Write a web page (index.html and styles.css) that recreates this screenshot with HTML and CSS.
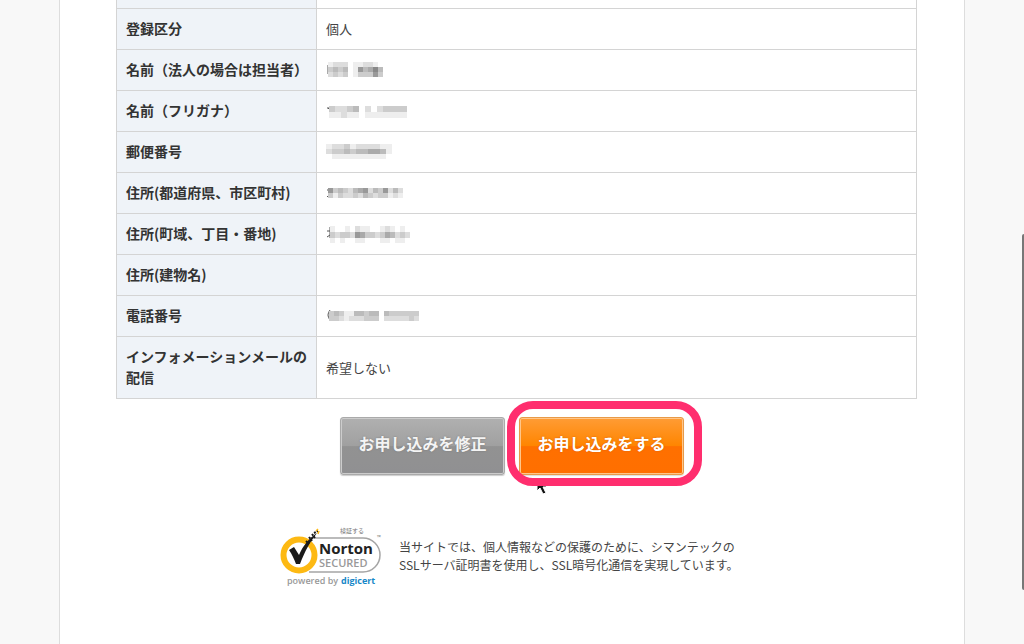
FILE: index.html
```
<!DOCTYPE html>
<html lang="ja">
<head>
  <meta charset="UTF-8">
  <title>お申し込み内容の確認</title>
  <link rel="stylesheet" href="styles.css">
</head>
<body>
  <div class="wrapper">
    <table class="confirm">
      <tbody>
        <tr class="cut"><th></th><td></td></tr>
        <tr><th scope="row">登録区分</th><td>個人</td></tr>
        <tr><th scope="row">名前（法人の場合は担当者）</th><td><svg class="mosaic" data-name="person"></svg></td></tr>
        <tr><th scope="row">名前（フリガナ）</th><td><svg class="mosaic" data-name="kana"></svg></td></tr>
        <tr><th scope="row">郵便番号</th><td><svg class="mosaic" data-name="zip"></svg></td></tr>
        <tr><th scope="row">住所(都道府県、市区町村)</th><td><svg class="mosaic" data-name="city"></svg></td></tr>
        <tr><th scope="row">住所(町域、丁目・番地)</th><td><svg class="mosaic" data-name="street"></svg></td></tr>
        <tr><th scope="row">住所(建物名)</th><td></td></tr>
        <tr><th scope="row">電話番号</th><td><svg class="mosaic" data-name="tel"></svg></td></tr>
        <tr><th scope="row">インフォメーションメールの配信</th><td>希望しない</td></tr>
      </tbody>
    </table>

    <form class="buttons">
      <button type="button" class="btn gray">お申し込みを修正</button>
      <div class="submit">
        <button type="button" class="btn orange">お申し込みをする</button>
        <svg class="cursor" width="12" height="18" viewBox="0 0 12 18">
          <path d="M1 1v13l3-3 3 6 3-1-3-6h4z" fill="#111" stroke="#fff"/>
        </svg>
        <div class="ring"></div>
      </div>
    </form>

    <div class="ssl">
      <svg class="norton" width="104" height="64" viewBox="0 0 104 64">
        <text x="61" y="8" font-size="6" fill="#777">検証する</text>
        <path d="M30 13H84a17 17 0 0 1 0 34H30" fill="#fff" stroke="#a5a5a5" stroke-width="1.5"/>
        <circle cx="20" cy="30" r="15.5" fill="#fff" stroke="#fdb913" stroke-width="6"/>
        <path d="M10 25l5-3 5 8C24 21 29 14 38 8c-7 9-12 18-17 31h-4C15 34 13 29 10 25z" fill="#1a1a1a"/>
        <path d="M27 16l3 3M30 12l3 4M33 9l3 4M35 8l4-2" stroke="#1a1a1a" stroke-width="2" stroke-dasharray="2 1"/>
        <path d="M37 6l2-2M39 9l1-3" stroke="#fdb913" stroke-width="1.5"/>
        <text class="brand" x="40" y="29" font-size="15">Norton</text>
        <text class="secured" x="40" y="42" font-size="11">SECURED</text>
        <text x="98" y="14" font-size="5" fill="#777">™</text>
        <text class="powered" x="8" y="59" font-size="9">powered by</text>
        <text class="digicert" x="62" y="59" font-size="9">digicert</text>
      </svg>
      <p>当サイトでは、個人情報などの保護のために、シマンテックの<br>SSLサーバ証明書を使用し、SSL暗号化通信を実現しています。</p>
    </div>
  </div>
  <div class="scroll-thumb"></div>

  <script>
    // each digit is the darkness of one block, lead is the stroke left outside
    const mosaics = {
      person: { x: 2, w: 5, h: 5, rows: ['12220112210', '34340164574', '23230133363'], lead: 'M1 5h3M2 6v7' },
      kana: { x: 3, w: 6, h: 6, rows: ['3223402023333', '1121101111111'], lead: 'M1 6h2l-1 1' },
      zip: { x: 0, w: 6, h: 5, rows: ['12231222211', '23343445541', '01111111110'], lead: '' },
      city: { x: 2, w: 5, h: 5, rows: ['634324562436242', '313223243233121'], lead: 'M1 6h3M2 8h2M1 13l3-3' },
      street: { x: 4, w: 5, h: 6, rows: ['1001021100121010', '3233265332354232', '1010011000110110'], lead: 'M1 6h3M4 2v11M1 12l3-2' },
      tel: { x: 3, w: 5, h: 5, rows: ['343114434404333333', '332122233302222232'], lead: 'M4 3Q0 8 4 13' }
    };

    document.querySelectorAll('.mosaic').forEach(svg => {
      const m = mosaics[svg.dataset.name];
      const top = m.rows.length === 3 ? 1 : 4;
      let html = `<path d="${m.lead}" fill="none" stroke="#555"/>`;
      m.rows.forEach((row, r) => {
        [...row].forEach((n, c) => {
          const v = 255 - n * 17;
          html += `<rect x="${m.x + c * m.w}" y="${top + r * m.h}" width="${m.w}" height="${m.h}" fill="rgb(${v},${v},${v})"/>`;
        });
      });
      svg.innerHTML = html;
    });
  </script>
</body>
</html>
```
FILE: styles.css
```
body {
  font-family: "Noto Sans CJK JP", sans-serif;
  font-size: 13px;
  margin: 0;
  color: #444;
  background-color: #f8f8f8;
}
.wrapper {
  box-sizing: border-box;
  max-width: 906px;
  min-height: 100vh;
  margin: 0 auto;
  background-color: #fff;
  border: solid #ddd;
  border-width: 0 1px;
}
.confirm {
  width: calc(100% - 103px);
  margin: 0 47px 0 56px;
  border-collapse: collapse;
  line-height: 21px;
}
.confirm th, .confirm td {
  border: 1px solid #d4d4d4;
  padding: 9px 4px 10px 9px;
  text-align: left;
}
.confirm th {
  box-sizing: border-box;
  width: 200px;
  font-size: 14px;
  color: #333;
  background-color: #eff3f8;
}
.confirm .cut th, .confirm .cut td {
  height: 8px;
  padding: 0;
  border-top: none;
}
.mosaic {
  display: block;
  width: 110px;
  height: 18px;
}
.buttons {
  display: flex;
  justify-content: center;
  gap: 14px;
  margin-top: 18px;
}
.submit { position: relative; }
.btn {
  width: 165px;
  height: 58px;
  padding: 0 0 6px;
  font-family: inherit;
  font-size: 16px;
  font-weight: bold;
  color: #fff;
  border-radius: 3px;
  cursor: pointer;
}
.gray {
  color: #f4f4f4;
  border: 1px solid #aaa;
  background: linear-gradient(#b0b0b0, #a0a0a0 50%, #929292 51%, #909092);
  box-shadow: inset 0 0 0 1px #ccc, 0 1px 1px #ccc;
  text-shadow: 0 0 2px #777;
}
.orange {
  border: 1px solid #e89a48;
  background: linear-gradient(#ff9c35, #ff8500 50%, #ff7000 51%, #ff6f00);
  box-shadow: inset 0 0 0 1px #ffc68a, 0 1px 1px #ddd;
  text-shadow: 0 0 2px #d65e00;
}
.ring {
  position: absolute;
  inset: -16px -18px -11px -12px;
  border: 8px solid #ff2e6e;
  border-radius: 26px;
  pointer-events: none;
}
.cursor {
  position: absolute;
  left: 17px;
  top: 60px;
}
.ssl {
  display: flex;
  gap: 16px;
  max-width: 466px;
  margin: 50px auto 0;
}
.ssl p {
  margin: 13px 0 0;
  font-size: 12px;
  line-height: 18px;
}
.norton { flex: none; }
.brand {
  font-family: "Open Sans", sans-serif;
  font-weight: bold;
  fill: #222;
}
.secured {
  font-family: "Open Sans", sans-serif;
  font-weight: 600;
  fill: #999;
}
.powered {
  font-family: "Open Sans", sans-serif;
  font-weight: 600;
  fill: #999;
}
.digicert {
  font-family: "Open Sans", sans-serif;
  font-weight: bold;
  fill: #1787c8;
}
.scroll-thumb {
  position: fixed;
  right: 0;
  top: 234px;
  width: 2px;
  height: 356px;
  background-color: #777;
  border-radius: 2px 0 0 2px;
}
```
